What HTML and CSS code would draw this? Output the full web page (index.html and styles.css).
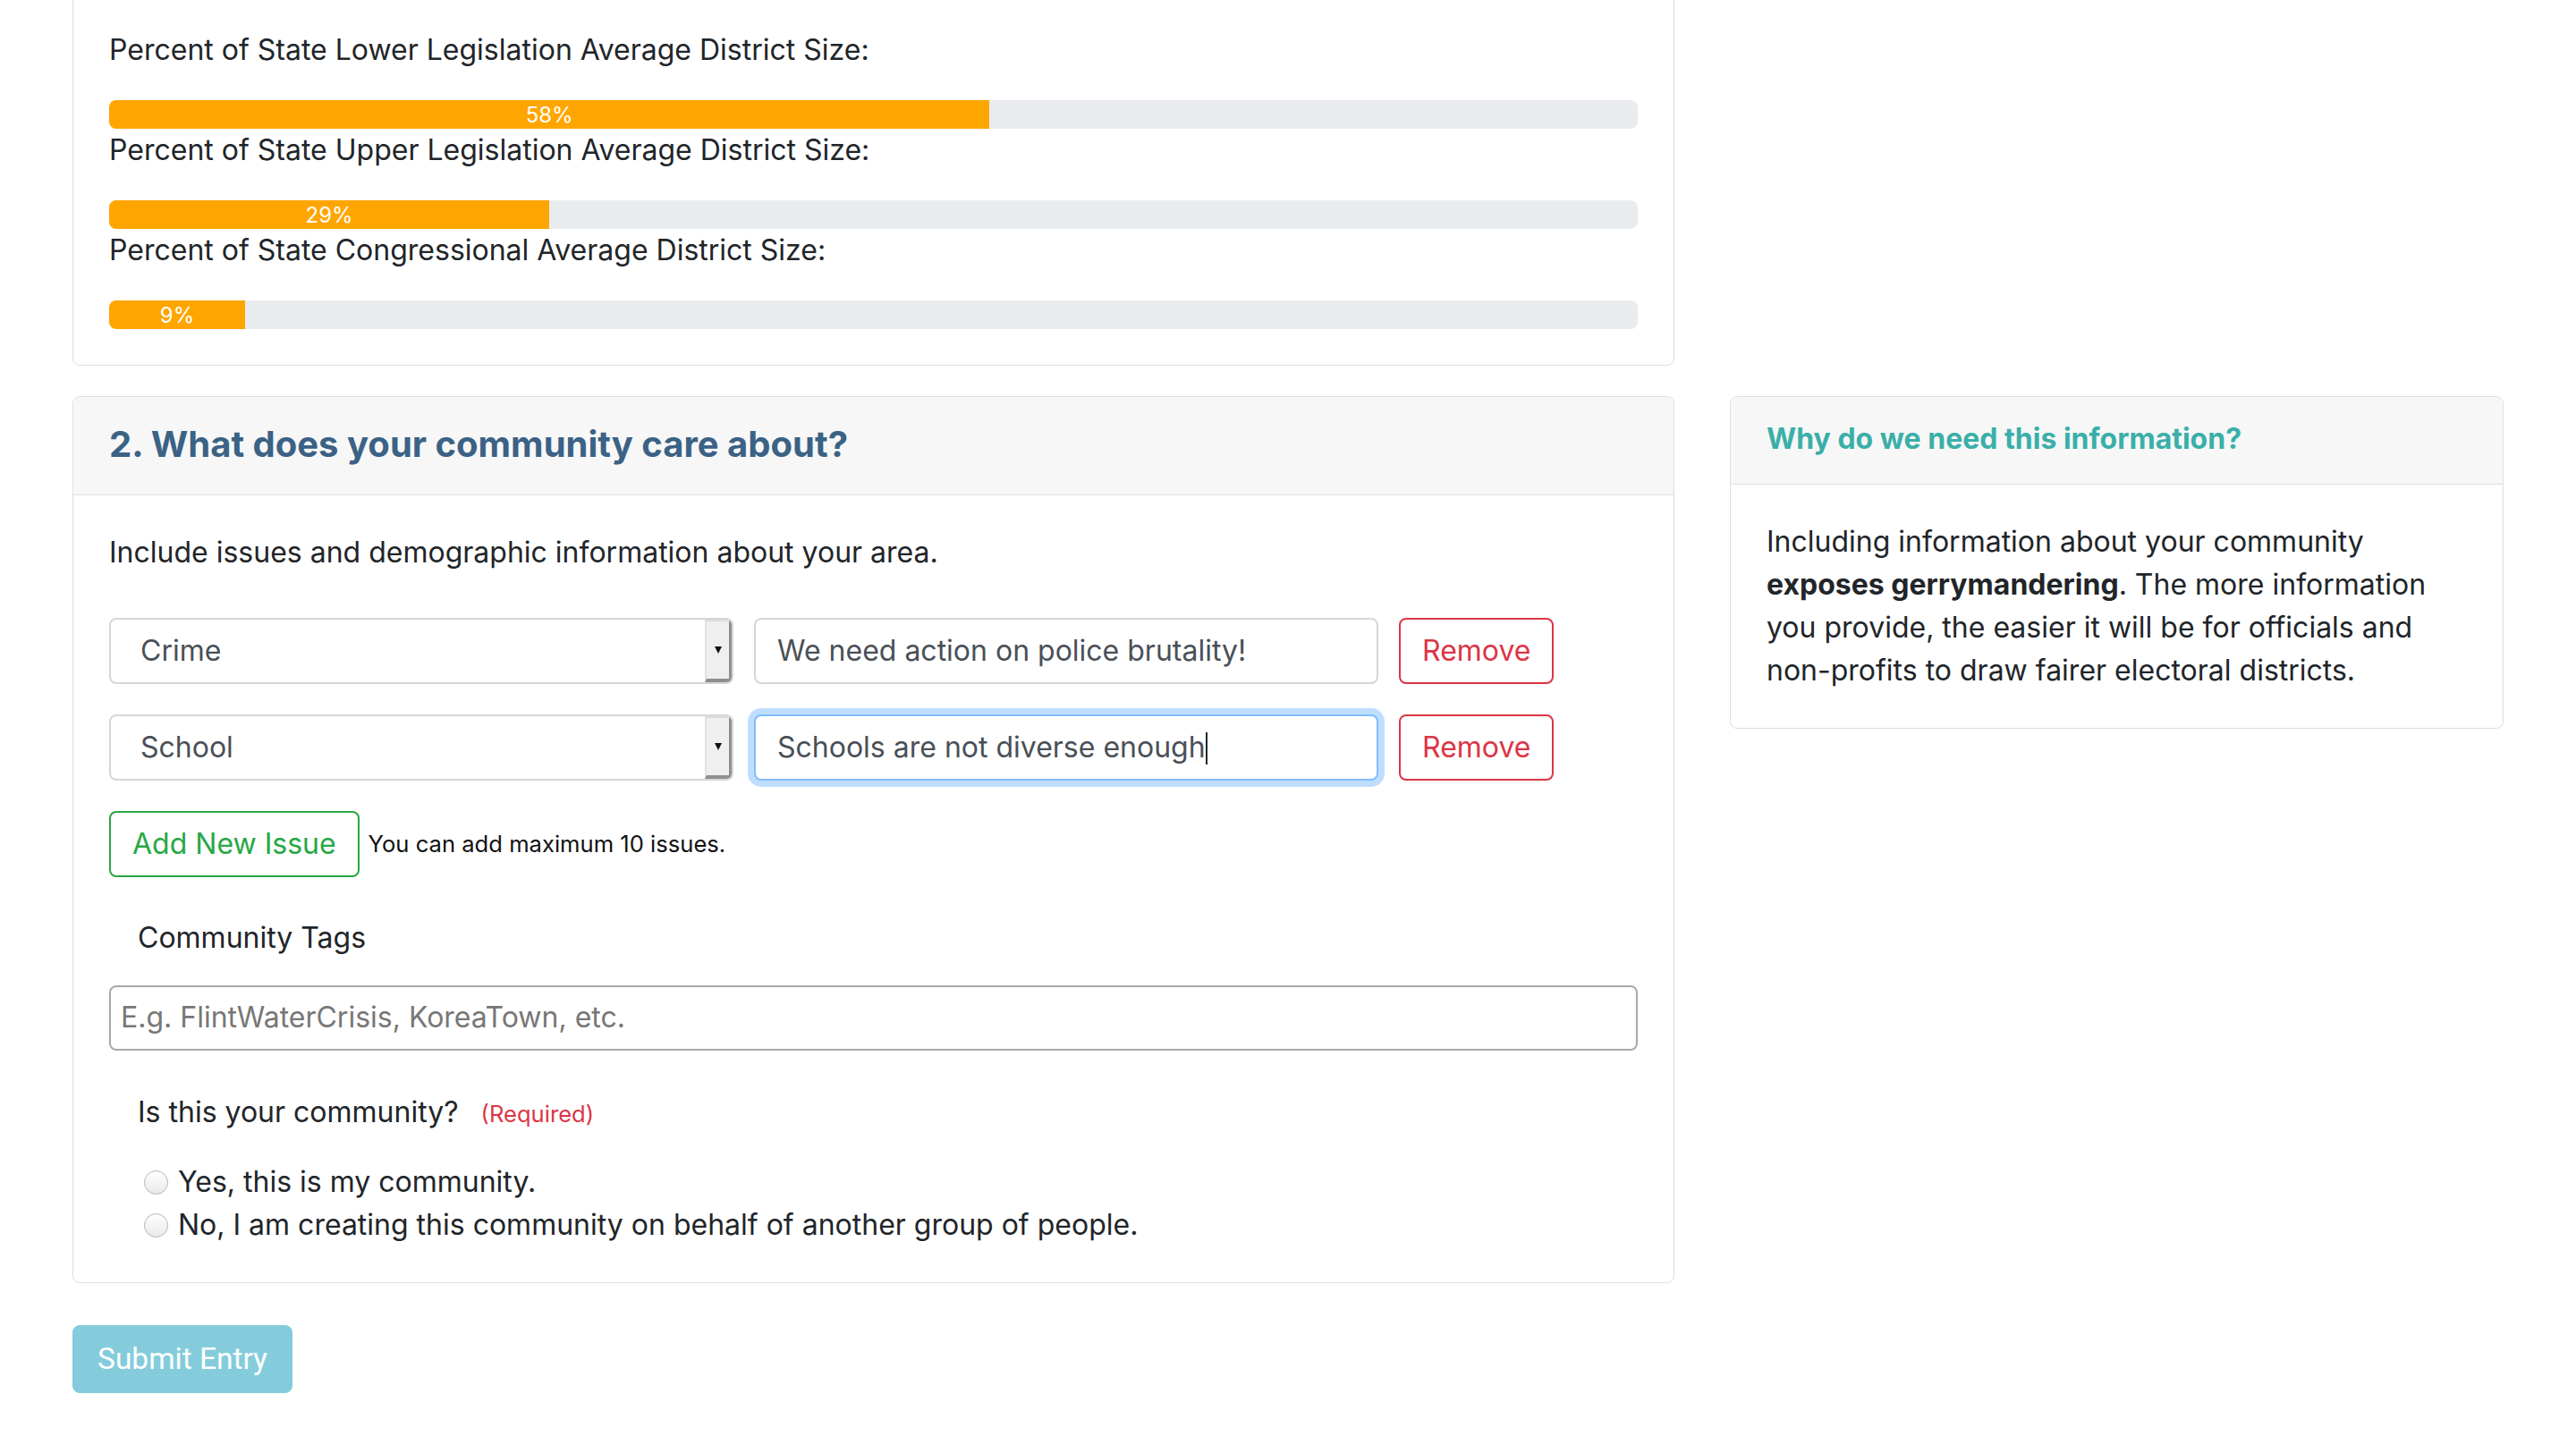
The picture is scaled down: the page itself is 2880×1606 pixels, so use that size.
FILE: index.html
```html
<!DOCTYPE html>
<html lang="en">
<head>
<meta charset="utf-8">
<title>Community Entry</title>
<link rel="stylesheet" href="styles.css">
</head>
<body>
<div class="page">
  <section class="card card-stats">
    <div class="card-body">
      <div class="stat">
        <p class="stat-label">Percent of State Lower Legislation Average District Size:</p>
        <div class="progress"><div class="progress-bar" style="width: 57.6%">58%</div></div>
      </div>
      <div class="stat">
        <p class="stat-label">Percent of State Upper Legislation Average District Size:</p>
        <div class="progress"><div class="progress-bar" style="width: 28.8%">29%</div></div>
      </div>
      <div class="stat">
        <p class="stat-label">Percent of State Congressional Average District Size:</p>
        <div class="progress"><div class="progress-bar" style="width: 8.9%">9%</div></div>
      </div>
    </div>
  </section>

  <section class="card card-issues">
    <div class="card-header">
      <h5 class="card-title">2. What does your community care about?</h5>
    </div>
    <div class="card-body">
      <p class="intro">Include issues and demographic information about your area.</p>

      <div class="issue-row">
        <div class="select-box">
          <span class="select-value">Crime</span>
          <span class="select-button"><span class="select-arrow"></span></span>
        </div>
        <div class="text-input">We need action on police brutality!</div>
        <button class="btn btn-remove" type="button">Remove</button>
      </div>

      <div class="issue-row">
        <div class="select-box">
          <span class="select-value">School</span>
          <span class="select-button"><span class="select-arrow"></span></span>
        </div>
        <div class="text-input is-focused">Schools are not diverse enough<span class="caret"></span></div>
        <button class="btn btn-remove" type="button">Remove</button>
      </div>

      <div class="add-row">
        <button class="btn btn-add" type="button">Add New Issue</button>
        <small class="hint">You can add maximum 10 issues.</small>
      </div>

      <label class="field-label">Community Tags</label>
      <div class="tags-input"><span class="placeholder">E.g. FlintWaterCrisis, KoreaTown, etc.</span></div>

      <div class="question">
        <span class="question-text">Is this your community?</span>
        <small class="required">(Required)</small>
      </div>
      <div class="radio-list">
        <label class="radio-item"><span class="radio"></span>Yes, this is my community.</label>
        <label class="radio-item"><span class="radio"></span>No, I am creating this community on behalf of another group of people.</label>
      </div>
    </div>
  </section>

  <aside class="card card-info">
    <div class="card-header info-header">
      <h6 class="info-title">Why do we need this information?</h6>
    </div>
    <div class="card-body">
      <p class="info-text">Including information about your community <strong>exposes gerrymandering</strong>. The more information you provide, the easier it will be for officials and non-profits to draw fairer electoral districts.</p>
    </div>
  </aside>

  <div class="submit-row">
    <button class="btn btn-submit" type="button" disabled>Submit Entry</button>
  </div>
</div>
</body>
</html>
```

FILE: styles.css
```css
* {
  box-sizing: border-box;
}

html, body {
  margin: 0;
  padding: 0;
  background: #ffffff;
}

body {
  font-family: Inter, "Noto Sans", sans-serif;
  font-size: 32px;
  line-height: 48px;
  color: #212529;
}

p {
  margin: 0;
}

.page {
  display: grid;
  grid-template-columns: 1791px 865px;
  column-gap: 62px;
  padding: 0 81px;
  align-items: start;
}

.card {
  border: 1px solid #dfdfdf;
  border-radius: 8px;
  background: #fff;
  overflow: hidden;
}

.card-body {
  padding: 40px;
}

.card-header {
  background: #f7f7f7;
  border-bottom: 1px solid #dfdfdf;
}

/* ---- stats card ---- */
.card-stats {
  grid-column: 1;
  grid-row: 1;
  margin-top: -9px;
}

.stat-label {
  margin-bottom: 32px;
}

.progress {
  height: 32px;
  background: #e9ecef;
  border-radius: 8px;
  overflow: hidden;
  display: flex;
}

.progress-bar {
  background: #ffa500;
  color: #fff;
  font-size: 24px;
  line-height: 34px;
  text-align: center;
  white-space: nowrap;
}

/* ---- issues card ---- */
.card-issues {
  grid-column: 1;
  grid-row: 2;
  margin-top: 34px;
}

.card-issues .card-header {
  padding: 29px 40px 32px;
}

.card-title {
  margin: 0;
  font-size: 40px;
  line-height: 48px;
  font-weight: 700;
  color: #3b6285;
}

.intro {
  margin-bottom: 49px;
}

.issue-row {
  display: grid;
  grid-template-columns: 698px 698px auto;
  column-gap: 23px;
  justify-content: start;
  margin-bottom: 34px;
  height: 74px;
}

.select-box {
  display: flex;
  height: 74px;
  border: 2px solid #d3d7db;
  border-radius: 8px;
  background: #fff;
  overflow: hidden;
}

.select-value {
  flex: 1;
  padding: 11px 0 0 33px;
  color: #495057;
}

.select-button {
  width: 30px;
  display: flex;
  align-items: center;
  justify-content: center;
  background: #efefef;
  border-left: 2px solid #e2e2e2;
  border-right: 3px solid #8f8f8f;
  border-bottom: 4px solid #8f8f8f;
  border-top: 2px solid #dcdcdc;
}

.select-arrow {
  width: 0;
  height: 0;
  border-left: 4px solid transparent;
  border-right: 4px solid transparent;
  border-top: 8px solid #111;
}

.text-input {
  height: 74px;
  border: 2px solid #d3d7db;
  border-radius: 8px;
  padding: 11px 24px;
  color: #495057;
  background: #fff;
  white-space: nowrap;
}

.text-input.is-focused {
  border-color: #80bdff;
  box-shadow: 0 0 0 7px rgba(0, 123, 255, 0.25);
}

.caret {
  display: inline-block;
  width: 2px;
  height: 36px;
  background: #212529;
  vertical-align: -8px;
}

.btn {
  font-family: Inter, "Noto Sans", sans-serif;
  font-size: 32px;
  line-height: 48px;
  padding: 11px 24px;
  border-radius: 8px;
  background: #fff;
  cursor: pointer;
}

.btn-remove {
  height: 74px;
  border: 2px solid #dc3545;
  color: #dc3545;
}

.add-row {
  display: flex;
  align-items: center;
  gap: 10px;
  margin-bottom: 44px;
}

.btn-add {
  height: 74px;
  border: 2px solid #28a745;
  color: #28a745;
}

.hint {
  font-size: 25.6px;
  line-height: 38px;
  color: #111;
}

.field-label {
  display: block;
  padding-left: 32px;
  margin-top: 1px;
  margin-bottom: 29px;
}

.tags-input {
  height: 73px;
  border: 2px solid #a9a9a9;
  border-radius: 8px;
  padding: 10px 11px;
  margin-bottom: 45px;
}

.placeholder {
  color: #777;
}

.question {
  padding-left: 32px;
  margin-bottom: 28px;
  display: flex;
  align-items: baseline;
  gap: 25px;
}

.required {
  font-size: 25.6px;
  color: #dc3545;
}

.radio-list {
  display: flex;
  flex-direction: column;
}

.radio-item {
  display: flex;
  align-items: center;
  padding-left: 39px;
}

.radio {
  width: 27px;
  height: 27px;
  border-radius: 50%;
  border: 1.5px solid #b4b4b4;
  background: linear-gradient(#ffffff, #e9e9e9);
  margin-right: 11px;
  flex: none;
}

/* ---- info card ---- */
.card-info {
  grid-column: 2;
  grid-row: 2;
  margin-top: 34px;
}

.info-header {
  padding: 28px 40px 31px;
}

.info-title {
  margin: 0;
  font-size: 32px;
  line-height: 38px;
  font-weight: 700;
  color: #3aafa9;
}

.info-text strong {
  font-weight: 700;
}

/* ---- submit ---- */
.submit-row {
  grid-column: 1;
  grid-row: 3;
  margin-top: 47px;
}

.btn-submit {
  font-family: Roboto, "Liberation Sans", sans-serif;
  font-size: 33.5px;
  height: 76px;
  padding: 13px 27px;
  border: 1px solid #84ccdc;
  background: #84ccdc;
  color: #fff;
  cursor: default;
}
```
